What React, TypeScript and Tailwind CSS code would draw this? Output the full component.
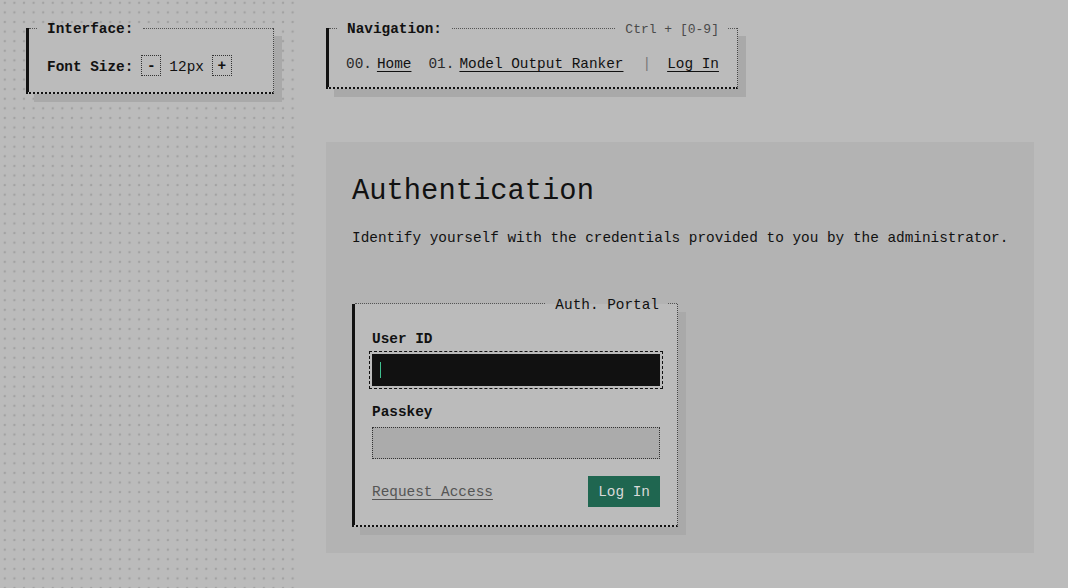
import React from 'react';

const mono = "font-['Liberation_Mono','DejaVu_Sans_Mono',monospace]";

interface FrameProps {
  label?: string;
  hint?: string;
  hintClassName?: string;
  className?: string;
  children: React.ReactNode;
}

// dotted "terminal" box: thick left rule, label sitting on the top edge
const Frame: React.FC<FrameProps> = ({ label, hint, hintClassName = '', className = '', children }) => {
  return (
    <div
      className={`flex flex-col bg-[#bbbbbb] border-l-[3px] border-l-[#111] border-r border-r-[#444] border-b-2 border-b-[#111] [border-right-style:dotted] [border-bottom-style:dotted] shadow-[8px_8px_0_0_#a9a9a9] ${className}`}
    >
      <div className="-mt-[9px] flex h-[18px] items-center">
        {label ? (
          <>
            <div className="w-[8px] border-t border-dotted border-[#555]" />
            <span className="px-[10px] pt-[3px] font-bold leading-none">{label}</span>
          </>
        ) : null}
        <div className="flex-1 border-t border-dotted border-[#555]" />
        {hint ? (
          <>
            <span className={`pl-[10px] pr-[9px] pt-[3px] leading-none ${hintClassName}`}>{hint}</span>
            <div className="w-[9px] border-t border-dotted border-[#555]" />
          </>
        ) : null}
      </div>
      {children}
    </div>
  );
};

const StepButton: React.FC<{ children: React.ReactNode }> = ({ children }) => (
  <button className="flex h-[21px] w-[20px] items-center justify-center border border-dotted border-[#333] pt-[2px] font-bold leading-none text-[#111]">
    {children}
  </button>
);

export default function App() {
  return (
    <div className={`${mono} flex min-h-[588px] bg-[#bbbbbb] text-[14.4px] text-[#111]`}>
      {/* sidebar */}
      <aside className="w-[298px] shrink-0 bg-[radial-gradient(circle,#a2a2a2_1px,transparent_1.6px)] bg-[size:9.6px_9.6px] bg-[position:0_-2px] px-[26px] pt-[28px]">
        <Frame label="Interface:" className="w-[248px]">
          <div className="flex h-[21px] items-center pl-[18px] mt-[18px] mb-[16px] box-content">
            <span className="pt-[5px] font-bold">Font Size:</span>
            <div className="ml-[8px] flex items-center">
              <StepButton>-</StepButton>
              <span className="mx-[8px] pt-[5px]">12px</span>
              <StepButton>+</StepButton>
            </div>
          </div>
        </Frame>
      </aside>

      {/* main */}
      <main className="flex flex-1 flex-col items-start pl-[28px] pr-[34px] pt-[28px]">
        <Frame label="Navigation:" hint="Ctrl + [0-9]" hintClassName="text-[13px] text-[#4a4a4a]">
          <nav className="flex items-center pl-[17px] pr-[18px] pt-[17px] pb-[11px] leading-[21.6px]">
            <span className="text-[#2a2a2a]">00.</span>
            <a className="ml-[5px] underline underline-offset-[3px]">Home</a>
            <span className="ml-[17px] text-[#2a2a2a]">01.</span>
            <a className="ml-[5px] underline underline-offset-[3px]">Model Output Ranker</a>
            <span className="ml-[19px] text-[#777]">|</span>
            <a className="ml-[16px] underline underline-offset-[3px]">Log In</a>
          </nav>
        </Frame>

        <section className="mt-[53px] w-[708px] bg-[#b3b3b3] px-[26px] pt-[33px] pb-[26px]">
          <h1 className="text-[28.8px] leading-[1.2] text-[#111]">Authentication</h1>
          <p className="mt-[19px] whitespace-nowrap leading-[21.6px]">
            Identify yourself with the credentials provided to you by the administrator.
          </p>

          <Frame hint="Auth. Portal" className="mt-[54px] w-[326px]">
            <div className="flex flex-col px-[17px] pt-[14px] pb-[18px]">
              <label className="pt-[2px] font-bold leading-[21.6px]">User ID</label>
              <div className="mt-[4px] flex h-[32px] items-center bg-[#111] pl-[8px] outline outline-1 outline-dashed outline-[#111] outline-offset-2">
                <span className="h-[16px] w-px bg-[#3fbf8f]" />
              </div>

              <label className="mt-[14px] pt-[2px] font-bold leading-[21.6px]">Passkey</label>
              <div className="mt-[3px] h-[32px] border border-dotted border-[#333] bg-[#ababab]" />

              <div className="mt-[17px] flex items-center justify-between">
                <a className="pt-[3px] text-[#555] underline underline-offset-[3px]">Request Access</a>
                <button className="h-[31px] bg-[#1f6650] px-[10px] pt-[2px] text-[#d9d9d9]">Log In</button>
              </div>
            </div>
          </Frame>
        </section>
      </main>
    </div>
  );
}
